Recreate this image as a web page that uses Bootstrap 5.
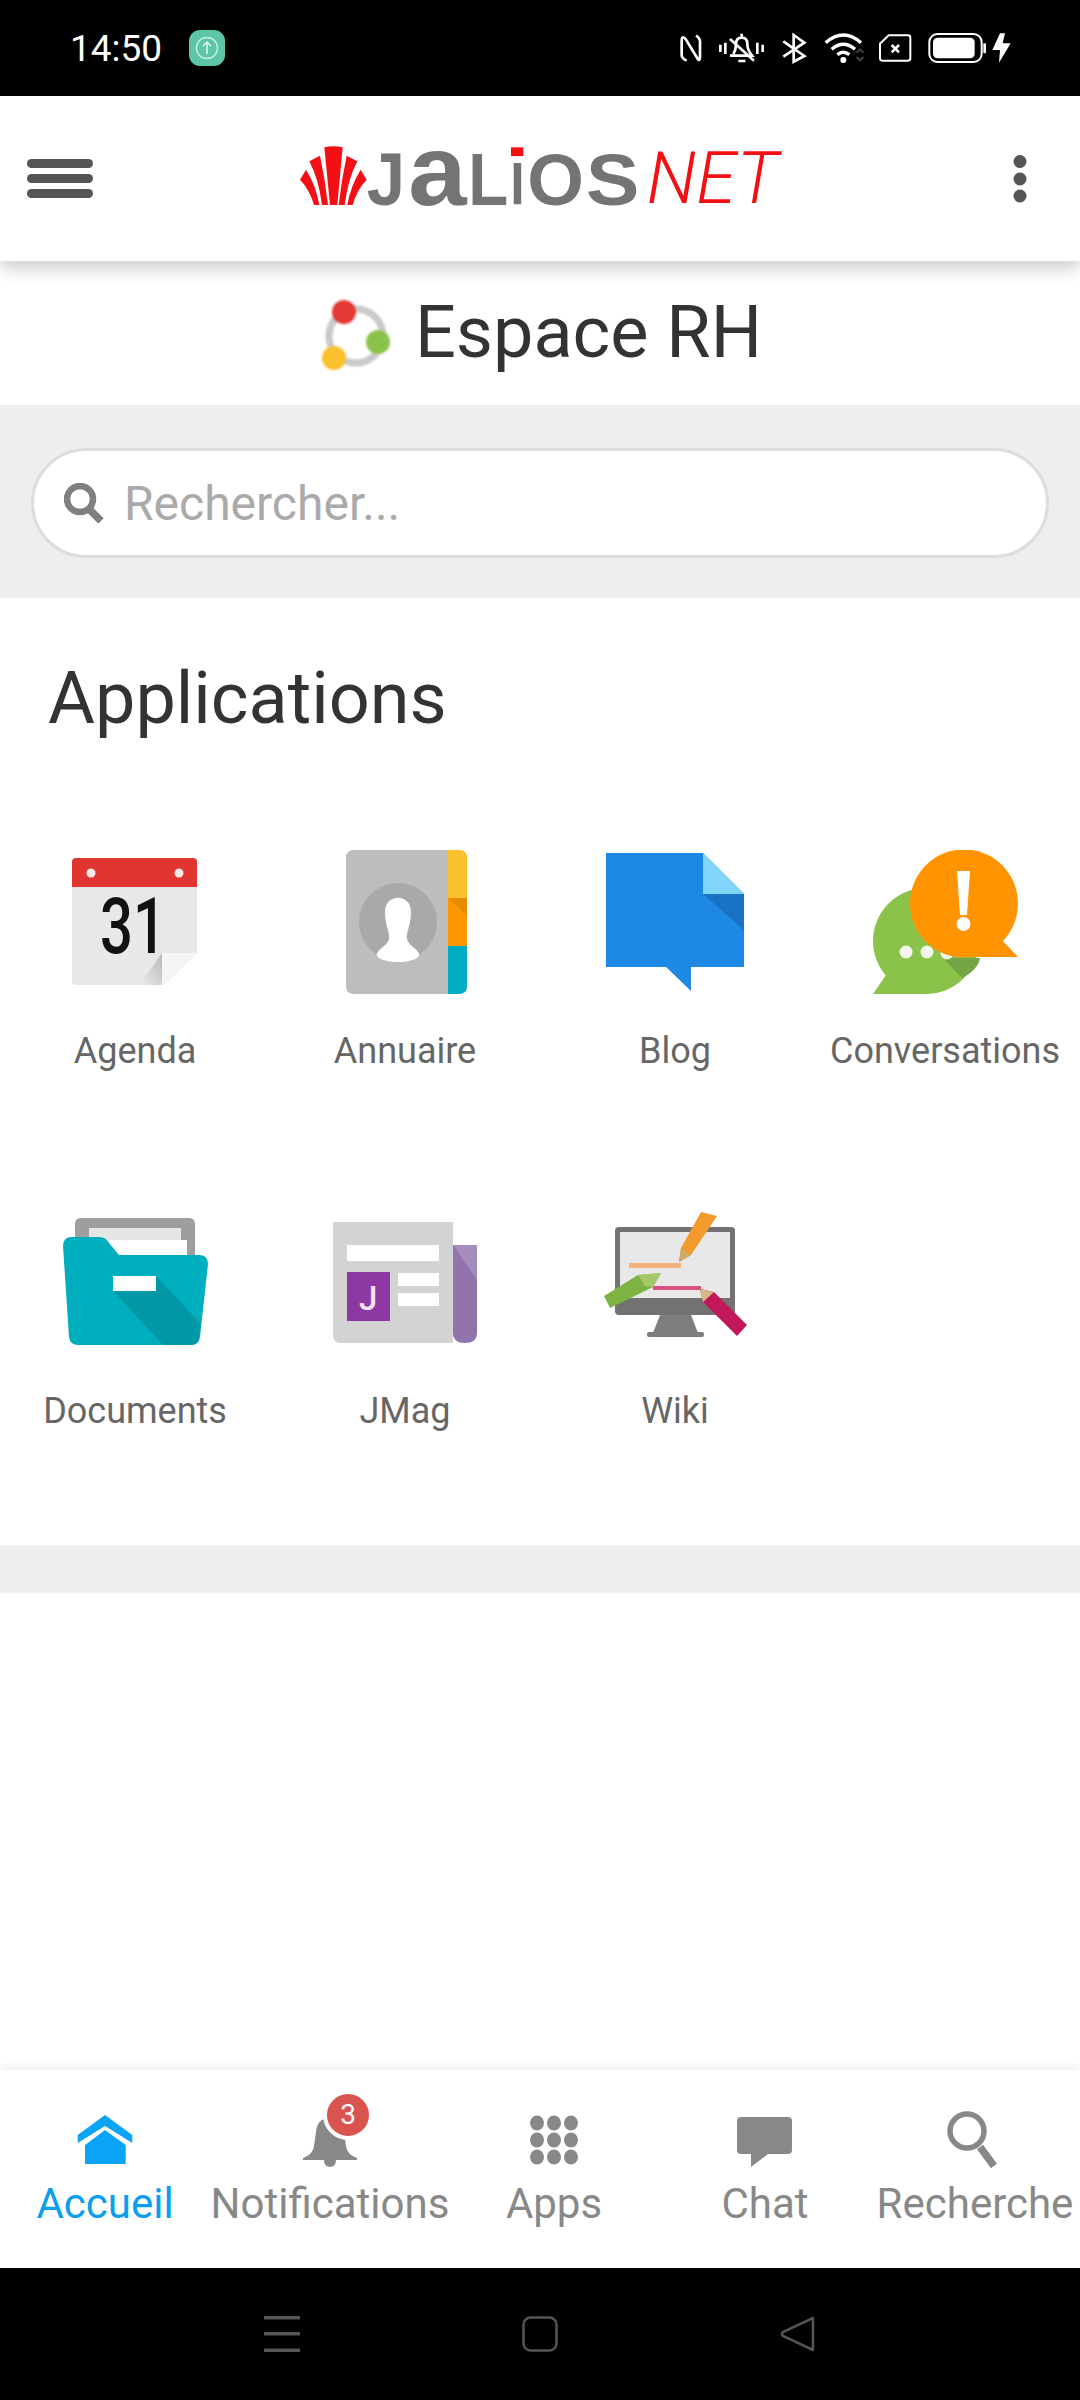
<!DOCTYPE html>
<html lang="fr">
<head>
    <meta charset="UTF-8" />
    <meta name="viewport" content="width=device-width, initial-scale=1.0" />
    <title>Espace RH</title>
    <link href="https://cdn.jsdelivr.net/npm/bootstrap@5.3.3/dist/css/bootstrap.min.css" rel="stylesheet" />
    <style>
        body {
            font-family: Roboto, "Liberation Sans", sans-serif;
            background-color: #fff;
            width: 1080px;
            height: 2400px;
            overflow: hidden;
        }

        svg {
            display: block;
            flex: none;
        }

        .phone-status {
            height: 96px;
            padding-left: 70px;
            padding-right: 50px;
            background-color: #000;
        }

        .status-time {
            font-size: 37px;
            line-height: 1;
            color: #fff;
        }

        .status-app {
            margin-left: 27px;
        }

        .status-icons {
            margin-top: 4px;
        }

        .app-header {
            height: 165px;
            padding-left: 27px;
            padding-right: 53px;
            position: relative;
            z-index: 2;
            box-shadow: 0 6px 18px rgba(0, 0, 0, 0.22);
        }

        .logo-box {
            margin-left: 187px;
        }

        .logo-word {
            font-family: "Liberation Sans", sans-serif;
            font-weight: 700;
            fill: #747474;
        }

        .logo-net {
            font-family: Roboto, sans-serif;
            font-style: italic;
            font-weight: 300;
            fill: #f40f14;
        }

        .space-title {
            height: 144px;
            padding: 29px 2px 0 4px;
            gap: 23px;
        }

        .space-title h1 {
            font-size: 72px;
            line-height: 86px;
            font-weight: 400;
            color: #333;
            margin: 0;
        }

        .space-mark {
            margin-top: 8px;
            filter: blur(1.2px);
        }

        .search-band {
            height: 193px;
            padding: 43px 31px 0;
            background-color: #eee;
        }

        .search-box {
            position: relative;
        }

        .search-box svg {
            position: absolute;
            left: 33px;
            top: 35px;
        }

        .search-box .form-control {
            height: 110px;
            padding-left: 90px;
            font-size: 48px;
            color: #555;
            border: 3px solid #ddd;
            box-shadow: none;
        }

        .search-box .form-control::placeholder {
            color: #aaa;
        }

        .apps-block {
            padding-top: 58px;
            padding-bottom: 35px;
        }

        .apps-block h2 {
            font-size: 72px;
            line-height: 86px;
            font-weight: 400;
            color: #333;
            margin: 0 0 48px 48px;
        }

        .app-tile {
            height: 360px;
            padding-top: 60px;
        }

        .app-label {
            margin-top: 36px;
            font-size: 36px;
            line-height: 43px;
            color: #666;
            white-space: nowrap;
        }

        .gray-strip {
            height: 48px;
            background-color: #eee;
        }

        .tab-bar {
            display: grid;
            grid-template-columns: 210px 240px 208px 214px 206px;
            height: 198px;
            padding-top: 40px;
            box-shadow: 0 -3px 8px rgba(0, 0, 0, 0.07);
            position: relative;
        }

        .tab-item {
            color: #888;
            font-size: 42px;
            line-height: 48px;
            white-space: nowrap;
        }

        .tab-item.is-active {
            color: #0a9fee;
        }

        .tab-icon {
            position: relative;
            margin-bottom: 10px;
        }

        .tab-count {
            position: absolute;
            left: 23px;
            top: -20px;
            width: 50px;
            height: 50px;
            padding: 0;
            font-size: 28px;
            font-weight: 400;
            line-height: 42px;
            color: #fff;
            background-color: #d9534f;
            border: 4px solid #fff;
        }

        .phone-nav {
            height: 132px;
            gap: 222px;
            background-color: #000;
        }
    </style>
</head>
<body class="d-flex flex-column">

<div class="phone-status d-flex align-items-center flex-none">
    <span class="status-time">14:50</span>
    <svg class="status-app" width="36" height="36" viewBox="0 0 36 36">
        <rect width="36" height="36" rx="11" fill="#5cc6a6" />
        <circle cx="18" cy="18" r="10.5" fill="none" stroke="#c4eee0" stroke-width="1.5" />
        <path d="M18 24V12M14 16l4-4 4 4" fill="none" stroke="#e4f8f1" stroke-width="1.5" />
    </svg>
    <svg class="status-icons ms-auto" width="380" height="60" viewBox="0 0 1140 180" fill="none" stroke="#fff" stroke-width="8">
        <path d="M110 122Q95 115 95 105V62Q95 46 106 56L143 116Q150 126 150 110V66Q150 54 138 47" />
        <path d="M211 74V96M226 68V102M322 68V102M338 74V96" />
        <path d="M275 41V49M250 102Q258 90 258 72Q258 53 275 53Q292 53 292 72Q292 90 306 107H240M240 57L312 122M265 123H286" />
        <path d="M400 64L463 108L431 125V45L463 68L400 110" />
        <path d="M527 68Q580 22 633 68M545 88Q580 58 615 88M562 104Q580 90 598 104" stroke-width="10" />
        <circle cx="580" cy="120" r="9" fill="#fff" stroke="none" />
        <path d="M620 98L630 88L640 98M620 111L630 121L640 111" stroke="#444" stroke-width="6" />
        <path d="M716 46H774Q781 46 781 53V115Q781 122 774 122H697Q690 122 690 115V71Z" stroke-width="6" />
        <path d="M725 75L747 97M747 75L725 97" />
        <rect x="838" y="42" width="157" height="84" rx="24" stroke-width="6" />
        <rect x="849" y="53" width="125" height="62" rx="14" fill="#fff" stroke="none" />
        <rect x="1000" y="70" width="8" height="30" rx="3" fill="#fff" stroke="none" />
        <path d="M1050 40L1027 90H1050L1047 128L1082 70H1058L1065 40Z" fill="#fff" stroke="none" />
    </svg>
</div>

<header class="app-header bg-white d-flex align-items-center flex-none">
    <svg width="66" height="39" viewBox="0 0 66 39" fill="#555">
        <rect width="66" height="9" rx="4.5" />
        <rect y="15" width="66" height="9" rx="4.5" />
        <rect y="30" width="66" height="9" rx="4.5" />
    </svg>
    <svg class="logo-box" width="520" height="140" viewBox="0 -60 1560 420">
        <g fill="#f40f14">
            <path d="M133 55Q160 49 188 55L172 228H150Z" />
            <path d="M88 97L120 80Q135 150 144 228H126Q116 150 88 97Z" />
            <path d="M60 152L78 122Q108 170 118 228H102Q88 180 60 152Z" />
            <path d="M232 97L200 80Q185 150 176 228H194Q204 150 232 97Z" />
            <path d="M260 152L242 122Q212 170 202 228H218Q232 180 260 152Z" />
        </g>
        <text class="logo-word" y="228"><tspan x="260" font-size="222" textLength="115" lengthAdjust="spacingAndGlyphs">J</tspan><tspan x="385" font-size="300" textLength="175" lengthAdjust="spacingAndGlyphs">a</tspan><tspan x="565" font-size="222" textLength="120" lengthAdjust="spacingAndGlyphs">L</tspan><tspan x="690" font-size="236" textLength="45" lengthAdjust="spacingAndGlyphs">i</tspan><tspan x="742" font-size="215" textLength="170" lengthAdjust="spacingAndGlyphs">O</tspan><tspan x="918" font-size="215" textLength="160" lengthAdjust="spacingAndGlyphs">S</tspan></text>
        <rect x="693" y="55" width="37" height="27" fill="#f40f14" />
        <rect x="690" y="82" width="44" height="10" fill="#fff" />
        <text class="logo-net" x="1100" y="222" font-size="215" textLength="395" lengthAdjust="spacingAndGlyphs">NET</text>
    </svg>
    <svg class="ms-auto" width="14" height="48" viewBox="0 0 14 48" fill="#555">
        <ellipse cx="7" cy="6.5" rx="6.5" ry="6.5" />
        <ellipse cx="7" cy="24" rx="6.5" ry="6.5" />
        <ellipse cx="7" cy="41" rx="6.5" ry="6.5" />
    </svg>
</header>

<main class="flex-grow-1 d-flex flex-column">
    <div class="space-title d-flex justify-content-center">
        <svg class="space-mark" width="72" height="76" viewBox="0 0 72 76">
            <circle cx="36" cy="38" r="27" fill="none" stroke="#c9c9c9" stroke-width="7" />
            <circle cx="24" cy="14" r="12" fill="#e53935" />
            <circle cx="58" cy="44" r="12" fill="#8bc34a" />
            <circle cx="14" cy="60" r="12" fill="#fbc02d" />
        </svg>
        <h1>Espace RH</h1>
    </div>

    <div class="search-band">
        <div class="search-box">
            <svg width="40" height="40" viewBox="0 0 40 40" fill="none" stroke="#808080">
                <circle cx="16" cy="16" r="13" stroke-width="6.5" />
                <path d="M25 26L37 38" stroke-width="7.5" />
            </svg>
            <input class="form-control rounded-pill" type="text" placeholder="Rechercher..." />
        </div>
    </div>

    <section class="apps-block">
        <h2>Applications</h2>
        <div class="row g-0">
            <div class="col-3 app-tile d-flex flex-column align-items-center">
                <svg width="144" height="144" viewBox="0 0 144 144">
                    <defs>
                        <linearGradient id="agenda-fold" x1="0" y1="1" x2="1" y2="0">
                            <stop offset="0" stop-color="#ececec" />
                            <stop offset="1" stop-color="#b8b8b8" />
                        </linearGradient>
                    </defs>
                    <path d="M9 37H134V103L101 135H13Q9 135 9 131Z" fill="#e8e8e8" />
                    <path d="M9 37V12Q9 8 13 8H130Q134 8 134 12V37Z" fill="#e03530" />
                    <circle cx="28" cy="23" r="4.5" fill="#fbe9e7" />
                    <circle cx="116" cy="23" r="4.5" fill="#fbe9e7" />
                    <text x="37" y="103" font-family="Roboto, sans-serif" font-size="77" font-weight="500" fill="#111" textLength="66" lengthAdjust="spacingAndGlyphs">31</text>
                    <path d="M99 103V135H76Z" fill="url(#agenda-fold)" />
                    <path d="M99 103H134L101 135H99Z" fill="#f5f5f5" />
                </svg>
                <div class="app-label">Agenda</div>
            </div>
            <div class="col-3 app-tile d-flex flex-column align-items-center">
                <svg width="144" height="144" viewBox="0 0 144 144">
                    <path d="M115 0H21Q13 0 13 8V136Q13 144 21 144H115Z" fill="#bdbdbd" />
                    <path d="M115 0H126Q134 0 134 8V48H115Z" fill="#fbc02d" />
                    <rect x="115" y="48" width="19" height="48" fill="#ff9800" />
                    <path d="M115 48H134V66Z" fill="#e68a00" />
                    <path d="M115 96H134V136Q134 144 126 144H115Z" fill="#00acc1" />
                    <circle cx="65" cy="72" r="39" fill="#a9a9a9" />
                    <path d="M52 62C52 43 78 43 78 62C78 75 73 82 74 89C76 97 88 100 86 106C80 114 50 114 44 106C42 100 54 97 56 89C57 82 52 75 52 62Z" fill="#fff" />
                </svg>
                <div class="app-label">Annuaire</div>
            </div>
            <div class="col-3 app-tile d-flex flex-column align-items-center">
                <svg width="144" height="144" viewBox="0 0 144 144">
                    <path d="M3 3H100L141 44V117H88V141L63 117H3Z" fill="#1e88e5" />
                    <path d="M100 3L141 44H100Z" fill="#81d4fa" />
                    <path d="M100 44H141V80Z" fill="#1a72c4" />
                </svg>
                <div class="app-label">Blog</div>
            </div>
            <div class="col-3 app-tile d-flex flex-column align-items-center">
                <svg width="146" height="144" viewBox="0 0 146 144">
                    <circle cx="54" cy="91" r="53" fill="#8bc34a" />
                    <path d="M1 144L14 125L54 144Z" fill="#8bc34a" />
                    <path d="M71 108H108Q106 120 90 128Z" fill="#74a545" />
                    <circle cx="34" cy="102" r="6.5" fill="#f1f8e9" />
                    <circle cx="55" cy="102" r="6.5" fill="#f1f8e9" />
                    <circle cx="75" cy="103" r="6.5" fill="#f1f8e9" />
                    <circle cx="92" cy="53.5" r="54" fill="#ff9400" />
                    <path d="M92 107H146L128 88Z" fill="#ff9400" />
                    <path d="M85 21H98L95 65H88Z" fill="#fff" />
                    <circle cx="91.500" cy="74" r="7" fill="#fff" />
                </svg>
                <div class="app-label">Conversations</div>
            </div>
            <div class="col-3 app-tile d-flex flex-column align-items-center">
                <svg width="145" height="144" viewBox="0 0 145 144">
                    <path d="M12 60V14Q12 8 18 8H126Q132 8 132 14V60Z" fill="#9e9e9e" />
                    <rect x="26" y="18" width="92" height="40" fill="#e6e6e6" />
                    <rect x="30" y="30" width="94" height="28" fill="#fff" />
                    <path d="M0 36Q0 27 9 27H36Q43 27 46 33L56 45H136Q145 45 145 54L137 127Q136 135 128 135H15Q7 135 6 127Z" fill="#00afbd" />
                    <path d="M50 81L93 66L137 113L136 127Q135 135 128 135H100Z" fill="#0097a7" />
                    <rect x="50" y="66" width="43" height="15" fill="#fff" />
                </svg>
                <div class="app-label">Documents</div>
            </div>
            <div class="col-3 app-tile d-flex flex-column align-items-center">
                <svg width="146" height="144" viewBox="0 0 146 144">
                    <path d="M1 12H121V133H9Q1 133 1 125Z" fill="#d3d3d3" />
                    <path d="M121 35H145V123Q145 133 133 133Q121 133 121 123Z" fill="#9274ac" />
                    <path d="M121 35L145 70V35Z" fill="#a68cbc" />
                    <rect x="15" y="35" width="92" height="16" fill="#fff" />
                    <rect x="15" y="62" width="43" height="49" fill="#8e39a3" />
                    <rect x="66" y="63" width="41" height="13" fill="#fff" />
                    <rect x="66" y="83" width="41" height="13" fill="#fff" />
                    <text x="27" y="100" font-family="Roboto, sans-serif" font-size="33" font-weight="500" fill="#f3e5f5">J</text>
                </svg>
                <div class="app-label">JMag</div>
            </div>
            <div class="col-3 app-tile d-flex flex-column align-items-center">
                <svg width="144" height="144" viewBox="0 0 144 144">
                    <rect x="12" y="17" width="120" height="88" rx="4" fill="#727272" />
                    <rect x="17" y="22" width="110" height="66" fill="#e8e8e8" />
                    <path d="M57 105H88L95 123H50Z" fill="#7d7d7d" />
                    <rect x="44" y="122" width="57" height="5" rx="2" fill="#7d7d7d" />
                    <rect x="26" y="53" width="52" height="5" fill="#f4b27a" />
                    <rect x="50" y="76" width="48" height="4" fill="#d84f80" />
                    <path d="M98 2L114 6L88 45L76 52L78 38Z" fill="#f39a2d" />
                    <path d="M88 45L76 52L78 38Z" fill="#cfa86a" />
                    <path d="M1 86L35 65L58 63L50 77L7 98Z" fill="#7cb342" />
                    <path d="M35 65L58 63L50 77L42 76Z" fill="#a5c96a" />
                    <path d="M97 79L111 82L144 115L134 126L100 92Z" fill="#c2185b" />
                    <path d="M97 79L111 82L100 92Z" fill="#d7b98a" />
                </svg>
                <div class="app-label">Wiki</div>
            </div>
        </div>
    </section>

    <div class="gray-strip"></div>
</main>

<nav class="tab-bar bg-white flex-none">
    <div class="tab-item is-active d-flex flex-column align-items-center">
        <div class="tab-icon">
            <svg width="60" height="60" viewBox="0 0 60 60" fill="#0ba4f6">
                <path d="M30 5L57.300 25V33L30 16L2.700 33V25Z" />
                <path d="M30 20L50.700 35V54H10V35Z" />
            </svg>
        </div>
        <span>Accueil</span>
    </div>
    <div class="tab-item d-flex flex-column align-items-center">
        <div class="tab-icon">
            <svg width="60" height="60" viewBox="0 0 60 60" fill="#888">
                <path d="M30 8C20 8 17 14 16 22L14 36C13 43 8 46 3 48V50H57V48C52 46 47 43 46 36L44 22C43 14 40 8 30 8Z" />
                <circle cx="30" cy="51" r="6" />
            </svg>
            <span class="badge rounded-circle tab-count">3</span>
        </div>
        <span>Notifications</span>
    </div>
    <div class="tab-item d-flex flex-column align-items-center">
        <div class="tab-icon">
            <svg width="60" height="60" viewBox="0 0 60 60" fill="#888">
                <ellipse cx="13" cy="13" rx="7" ry="7.500" />
                <ellipse cx="30" cy="13" rx="7" ry="7.500" />
                <ellipse cx="47" cy="13" rx="7" ry="7.500" />
                <ellipse cx="13" cy="30" rx="7" ry="7.500" />
                <ellipse cx="30" cy="30" rx="7" ry="7.500" />
                <ellipse cx="47" cy="30" rx="7" ry="7.500" />
                <ellipse cx="13" cy="47" rx="7" ry="7.500" />
                <ellipse cx="30" cy="47" rx="7" ry="7.500" />
                <ellipse cx="47" cy="47" rx="7" ry="7.500" />
            </svg>
        </div>
        <span>Apps</span>
    </div>
    <div class="tab-item d-flex flex-column align-items-center">
        <div class="tab-icon">
            <svg width="60" height="60" viewBox="0 0 60 60" fill="#888">
                <path d="M6 7H53Q57 7 57 11V40Q57 44 53 44H33L16 57V44H6Q2 44 2 40V11Q2 7 6 7Z" />
            </svg>
        </div>
        <span>Chat</span>
    </div>
    <div class="tab-item d-flex flex-column align-items-center">
        <div class="tab-icon">
            <svg width="60" height="60" viewBox="0 0 60 60" fill="none" stroke="#888">
                <circle cx="22" cy="21" r="17" stroke-width="5.500" />
                <path d="M35 37L49 56" stroke-width="7.500" />
            </svg>
        </div>
        <span>Recherche</span>
    </div>
</nav>

<div class="phone-nav d-flex align-items-center justify-content-center flex-none">
    <svg width="36" height="36" viewBox="0 0 36 36" fill="#555">
        <rect width="36" height="3.500" />
        <rect y="16" width="36" height="3.500" />
        <rect y="32.500" width="36" height="3.500" />
    </svg>
    <svg width="36" height="36" viewBox="0 0 36 36" fill="none" stroke="#555" stroke-width="2.500">
        <rect x="1.500" y="1.500" width="33" height="33" rx="7" />
    </svg>
    <svg width="36" height="36" viewBox="0 0 36 36" fill="none" stroke="#555" stroke-width="2.500">
        <path d="M33 3V33Q33 35 31 33L3 20Q1 18 3 16L31 3Q33 1 33 3Z" />
    </svg>
</div>

<script src="https://cdn.jsdelivr.net/npm/bootstrap@5.3.3/dist/js/bootstrap.bundle.min.js"></script>
</body>
</html>
